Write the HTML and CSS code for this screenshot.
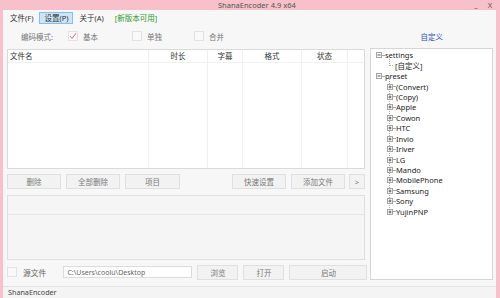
FILE: index.html
```html
<!DOCTYPE html>
<html lang="zh-CN">
<head>
  <meta charset="UTF-8">
  <title>ShanaEncoder 4.9 x64</title>
  <link rel="stylesheet" href="styles.css">
</head>
<body>

<div class="titlebar">
  <span class="title">ShanaEncoder 4.9 x64</span>
  <span class="ctl">_</span>
  <span class="ctl close">X</span>
</div>

<div class="client">
  <div class="menubar">
    <span class="menu">文件(F)</span>
    <span class="menu active">设置(P)</span>
    <span class="menu">关于(A)</span>
    <span class="menu update">[新版本可用]</span>
  </div>

  <div class="toolbar">
    <span class="label">编码模式:</span>
    <span class="check on"><svg width="10" height="10" viewBox="0 0 10 10"><path d="M2.2 5.2 4 7.4 8 2.2" fill="none" stroke="#e0627e" stroke-width="1"/></svg></span>
    <span class="opt">基本</span>
    <span class="check c2"></span>
    <span class="opt">单独</span>
    <span class="check c3"></span>
    <span class="opt">合并</span>
    <span class="custom">自定义</span>
  </div>

  <div class="main">
    <div class="left">
      <div class="list">
        <div class="col first"><div class="head">文件名</div></div>
        <div class="col"><div class="head">时长</div></div>
        <div class="col"><div class="head">字幕</div></div>
        <div class="col"><div class="head">格式</div></div>
        <div class="col"><div class="head">状态</div></div>
        <div class="col last"><div class="head"></div></div>
      </div>

      <div class="buttons">
        <button class="btn">删除</button>
        <button class="btn">全部删除</button>
        <button class="btn w55">项目</button>
        <span class="spacer"></span>
        <button class="btn">快速设置</button>
        <button class="btn">添加文件</button>
        <button class="btn more">&gt;</button>
      </div>

      <div class="log">
        <div class="log-head"></div>
      </div>

      <div class="bottom">
        <span class="check src"></span>
        <span class="src-label">源文件</span>
        <span class="path">C:\Users\coolu\Desktop</span>
        <button class="btn b40">浏览</button>
        <button class="btn b40">打开</button>
        <button class="btn start">启动</button>
      </div>
    </div>

    <div class="tree">
      <div class="node">
        <svg class="exp" width="6" height="6" viewBox="0 0 6 6"><rect x=".5" y=".5" width="5" height="5" fill="#fff" stroke="#a4a4a4"/><path d="M1.5 3h3" stroke="#555"/></svg>
        <span class="dash"></span>settings
      </div>
      <div class="kids single">
        <div class="node kid leaf"><span class="elbow"></span>[自定义]</div>
      </div>
      <div class="node">
        <svg class="exp" width="6" height="6" viewBox="0 0 6 6"><rect x=".5" y=".5" width="5" height="5" fill="#fff" stroke="#a4a4a4"/><path d="M1.5 3h3" stroke="#555"/></svg>
        <span class="dash"></span>preset
      </div>
      <div class="kids" id="presets"></div>
    </div>
  </div>

  <div class="status">ShanaEncoder</div>
</div>

<script>
  const presets = ["(Convert)", "(Copy)", "Apple", "Cowon", "HTC", "Invio", "Iriver",
    "LG", "Mando", "MobilePhone", "Samsung", "Sony", "YujinPNP"];
  const box = document.getElementById("presets");

  // Plus boxes for the collapsed preset groups
  presets.forEach(name => {
    const row = document.createElement("div");
    row.className = "node kid";
    row.innerHTML = '<svg class="exp" width="6" height="6" viewBox="0 0 6 6">' +
      '<rect x=".5" y=".5" width="5" height="5" fill="#fff" stroke="#a4a4a4"/>' +
      '<path d="M1.5 3h3M3 1.5v3" stroke="#555"/></svg><span class="dash"></span>' + name;
    box.appendChild(row);
  });
</script>
</body>
</html>
```

FILE: styles.css
```css
body {
  margin: 0;
  width: 500px;
  height: 298px;
  overflow: hidden;
  display: flex;
  flex-direction: column;
  background-color: #f8c0ca;
  font-family: "Noto Sans", "Noto Sans CJK SC", sans-serif;
  font-size: 7.5px;
  color: #333;
}
.titlebar {
  height: 10px;
  display: flex;
  align-items: center;
  color: #555;
  font-size: 7.5px;
}
.title {
  margin-left: 218px;
}
.ctl {
  margin-left: auto;
  width: 14px;
  text-align: center;
}
.ctl.close {
  margin-left: 0;
  margin-right: 3px;
}
.client {
  flex: 1;
  margin: 0 4px 0 3px;
  background-color: #f7f7f7;
  display: flex;
  flex-direction: column;
}
.menubar {
  height: 16px;
  display: flex;
  align-items: center;
  padding-left: 2px;
  gap: 1px;
}
.menu {
  padding: 0 4px;
  height: 10px;
  line-height: 10px;
  border: 1px solid transparent;
}
.menu.active {
  background-color: #cde6f7;
  border-color: #88bde6;
}
.menu.update {
  color: #2a9a2a;
  margin-left: 0;
}
.toolbar {
  height: 20px;
  display: flex;
  align-items: center;
  color: #777;
}
.label {
  margin-left: 18px;
}
.check {
  flex: none;
  width: 10px;
  height: 10px;
  box-sizing: border-box;
  border: 1px solid #e2e2e2;
  background-color: #f9f9f9;
  display: inline-flex;
}
.check.on {
  margin-left: 15px;
}
.check.on svg {
  margin: -1px;
}
.check.c2 {
  margin-left: 34px;
}
.check.c3 {
  margin-left: 32px;
}
.opt {
  margin-left: 5px;
}
.custom {
  margin-left: auto;
  margin-right: 53px;
  color: #2a4cc4;
}
.main {
  height: 240px;
  box-sizing: border-box;
  display: flex;
  gap: 5px;
  padding: 2px 3px 0 4px;
}
.left {
  width: 358px;
  display: flex;
  flex-direction: column;
  padding-top: 1px;
}
.list {
  height: 120px;
  box-sizing: border-box;
  border: 1px solid #dadada;
  background-color: #fff;
  display: grid;
  grid-template-columns: 141px 59px 35px 59px 46px 1fr;
}
.col {
  border-right: 1px solid #efefef;
}
.col.last {
  border-right: none;
}
.head {
  height: 12px;
  line-height: 12px;
  text-align: center;
  color: #333;
  border-bottom: 1px solid #f2f2f2;
}
.col.first .head {
  text-align: left;
  padding-left: 2px;
}
.buttons {
  margin-top: 5px;
  height: 15px;
  display: flex;
  gap: 5px;
}
.btn {
  flex: none;
  width: 54px;
  height: 15px;
  padding: 0;
  border: 1px solid #e0e0e0;
  background-color: #f2f2f2;
  font-family: inherit;
  font-size: 7.5px;
  color: #7a7a7a;
}
.btn.w55 {
  width: 55px;
}
.btn.more {
  width: 16px;
  margin-left: -1px;
}
.spacer {
  flex: 1;
}
.log {
  margin-top: 6px;
  height: 65px;
  box-sizing: border-box;
  border: 1px solid #e0e0e0;
  background-color: #f5f5f5;
}
.log-head {
  height: 18px;
  border-bottom: 1px solid #e6e6e6;
}
.bottom {
  margin-top: 5px;
  height: 16px;
  display: flex;
  align-items: center;
}
.check.src {
  margin-top: -2px;
}
.src-label {
  flex: none;
  white-space: nowrap;
  margin-left: 6px;
  margin-top: -2px;
  color: #666;
  font-size: 7.8px;
}
.path {
  flex: none;
  margin-left: 17px;
  width: 129px;
  height: 12px;
  box-sizing: border-box;
  line-height: 11px;
  padding-left: 3px;
  border: 1px solid #dcdcdc;
  background-color: #fff;
  color: #666;
  font-size: 7px;
  margin-top: -2px;
}
.btn.b40 {
  width: 41px;
  margin-left: 5px;
  margin-top: -1px;
}
.btn.start {
  width: 78px;
  margin-left: 5px;
  margin-top: -1px;
}
.tree {
  width: 123px;
  height: 232px;
  box-sizing: border-box;
  border: 1px solid #d6d6d6;
  background-color: #fff;
  padding: 1px 0 0 5px;
  color: #222;
}
.node {
  height: 10.45px;
  display: flex;
  align-items: center;
  white-space: nowrap;
}
.exp {
  flex: none;
  position: relative;
}
.dash {
  width: 2px;
  height: 0;
  margin: 0 1px 0 0;
  border-top: 1px dotted #aaa;
}
.kids {
  position: relative;
}
.kids::before {
  content: "";
  position: absolute;
  left: 13px;
  top: -3px;
  bottom: 5px;
  border-left: 1px dotted #aaa;
}
.kid {
  padding-left: 11px;
}
.kid.leaf {
  padding-left: 13px;
}
.elbow {
  width: 4px;
  height: 0;
  margin-right: 2px;
  border-top: 1px dotted #aaa;
}
.status {
  height: 12px;
  box-sizing: border-box;
  border-top: 1px solid #e2e2e2;
  background-color: #f4f4f4;
  line-height: 11px;
  padding-left: 5px;
  color: #444;
  font-size: 7.2px;
}
```
